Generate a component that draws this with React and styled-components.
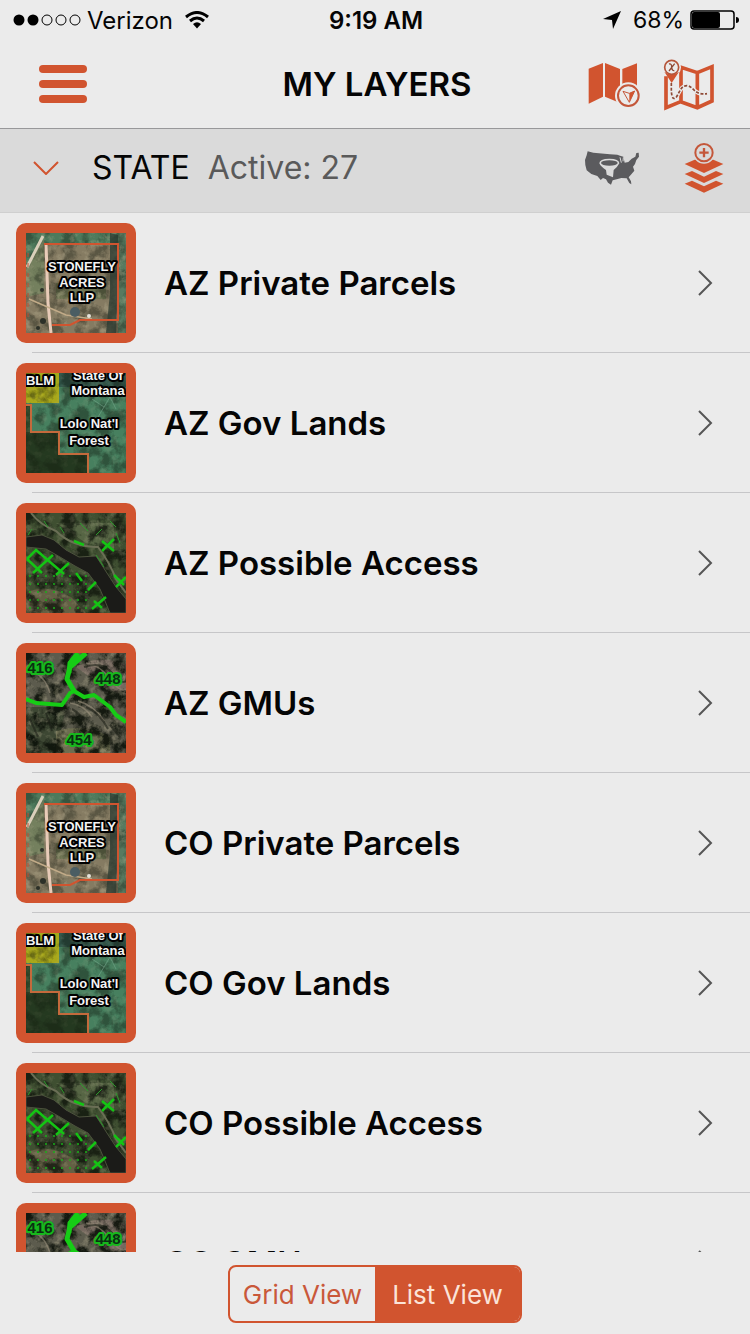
import React, { useState } from "react";
import styled, { createGlobalStyle } from "styled-components";

const LAYERS = [
  { id: 1, name: "AZ Private Parcels", kind: "parcels" },
  { id: 2, name: "AZ Gov Lands", kind: "gov" },
  { id: 3, name: "AZ Possible Access", kind: "access" },
  { id: 4, name: "AZ GMUs", kind: "gmu" },
  { id: 5, name: "CO Private Parcels", kind: "parcels" },
  { id: 6, name: "CO Gov Lands", kind: "gov" },
  { id: 7, name: "CO Possible Access", kind: "access" },
  { id: 8, name: "CO GMUs", kind: "gmu" },
];

const App = () => {
  const [view, setView] = useState("list");
  const [open, setOpen] = useState(true);

  return (
    <Page>
      <GlobalStyle />
      <TextureDefs />
      <Header>
        <StatusBar />
        <NavBar>
          <NavSide>
            <IconButton aria-label="Menu">
              <MenuIcon />
            </IconButton>
          </NavSide>
          <Title>MY LAYERS</Title>
          <NavSide $end>
            <IconButton aria-label="My location map">
              <MapIcon />
            </IconButton>
            <IconButton aria-label="Offline maps">
              <RouteMapIcon />
            </IconButton>
          </NavSide>
        </NavBar>
      </Header>
      <SectionBar>
        <SectionToggle aria-expanded={open} onClick={() => setOpen(!open)}>
          <ChevronDown />
          <SectionName>STATE</SectionName>
          <ActiveCount>Active: 27</ActiveCount>
        </SectionToggle>
        <SectionActions>
          <IconButton aria-label="Filter by state">
            <StatesIcon />
          </IconButton>
          <IconButton aria-label="Add layer">
            <AddLayerIcon />
          </IconButton>
        </SectionActions>
      </SectionBar>
      <LayerList>
        {open && LAYERS.map((layer) => <LayerRow key={layer.id} {...layer} />)}
      </LayerList>
      <Footer>
        <Segments>
          <Segment
            $active={view === "grid"}
            aria-pressed={view === "grid"}
            onClick={() => setView("grid")}
          >
            Grid View
          </Segment>
          <Segment
            $active={view === "list"}
            aria-pressed={view === "list"}
            onClick={() => setView("list")}
          >
            List View
          </Segment>
        </Segments>
      </Footer>
    </Page>
  );
};

export default App;

const StatusBar = () => (
  <Status>
    <StatusGroup>
      <svg width="68" height="12" viewBox="0 0 68 12" aria-hidden="true">
        <circle cx="6" cy="6" r="5.500" />
        <circle cx="20" cy="6" r="5.500" />
        <g fill="none" stroke="#000">
          <circle cx="34" cy="6" r="5" />
          <circle cx="48" cy="6" r="5" />
          <circle cx="62" cy="6" r="5" />
        </g>
      </svg>
      <Carrier>Verizon</Carrier>
      <WifiIcon />
    </StatusGroup>
    <Clock>9:19 AM</Clock>
    <StatusGroup $end>
      <svg width="18" height="18" viewBox="0 0 18 18" aria-hidden="true">
        <path d="M18 0 L10 18 L9 9 L0 8 Z" />
      </svg>
      <Percent>68%</Percent>
      <svg width="49" height="20" viewBox="0 0 49 20" aria-hidden="true">
        <rect x="1" y="1" width="43" height="18" rx="3" fill="none" stroke="#000" strokeWidth="1.5" />
        <rect x="2" y="2" width="28" height="16" rx="2" />
        <path d="M46 7 Q49 7 49 10 Q49 13 46 13 Z" />
      </svg>
    </StatusGroup>
  </Status>
);

const WifiIcon = () => (
  <svg width="24" height="18" viewBox="0 0 24 18" aria-hidden="true">
    <g fill="none" stroke="#000" strokeWidth="3">
      <path d="M1 6 Q12 -3 23 6" />
      <path d="M5 10 Q12 4 19 10" />
    </g>
    <path d="M8 13 Q12 9.500 16 13 L12 17.500 Z" />
  </svg>
);

const MenuIcon = () => (
  <svg width="48" height="38" viewBox="0 0 48 38">
    <rect width="48" height="8" rx="4" />
    <rect y="15" width="48" height="8" rx="4" />
    <rect y="30" width="48" height="8" rx="4" />
  </svg>
);

const MapIcon = () => (
  <svg width="54" height="46" viewBox="0 0 162 138">
    <path d="M5 23 L48 6 V107 L5 128 Z" />
    <path d="M54 6 L99 24 V126 L54 107 Z" />
    <path d="M106 24 L150 7 V107 L106 126 Z" />
    <circle cx="124" cy="104" r="40" fill="#ebebeb" />
    <circle cx="124" cy="104" r="31" fill="none" stroke="#c4573a" strokeWidth="6" />
    <path d="M108 91 L127 97 L143 90 L127 124 Z" fill="none" stroke="#c4573a" strokeWidth="3" />
    <path d="M127 97 L143 90 L127 124 Z" />
  </svg>
);

const RouteMapIcon = () => (
  <svg width="52" height="54" viewBox="0 0 156 162">
    <path
      d="M9 58 V152 L53 134 L103 152 L147 132 V29 L103 47 L54 31 V134 M103 47 V152"
      fill="none"
      stroke="#d1542f"
      strokeWidth="11"
    />
    <path
      d="M25 78 V104 Q28 134 40 120 C52 102 54 86 72 86 C92 88 94 116 132 110"
      fill="none"
      stroke="#ebebeb"
      strokeWidth="12"
    />
    <path
      d="M25 78 V104 Q28 134 40 120 C52 102 54 86 72 86 C92 88 94 116 132 110"
      fill="none"
      stroke="#8f4a36"
      strokeWidth="5"
      strokeDasharray="9 5"
    />
    <circle cx="26" cy="31" r="28" fill="#ebebeb" />
    <path d="M4 44 Q26 60 48 44 L26 78 Z" />
    <circle cx="26" cy="31" r="21" fill="#ebebeb" stroke="#b5553a" strokeWidth="5" />
    <path d="M18 21 Q26 19 26 30 Q27 42 34 41 M35 20 L18 42" fill="none" stroke="#8f4a36" strokeWidth="4" />
  </svg>
);

const ChevronDown = () => (
  <svg width="26" height="14" viewBox="0 0 26 14" aria-hidden="true">
    <path d="M1 1 L13 13 L25 1" fill="none" stroke="#d1542f" strokeWidth="2" />
  </svg>
);

const ChevronRight = () => (
  <svg width="16" height="26" viewBox="0 0 16 26" aria-hidden="true">
    <path d="M2 1 L14 13 L2 25" fill="none" stroke="#555" strokeWidth="2" />
  </svg>
);

const StatesIcon = () => (
  <svg width="56" height="36" viewBox="0 0 168 108">
    <path
      fill="#5b5b5e"
      d="M11 4 L28 8 L78 13 L100 14 L108 17 L118 20 L122 38 L133 36 L143 26 L154 20 L157 9 L164 8 L165 20 L157 30 L153 42 L147 50 L151 62 L142 73 L134 82 L141 94 L142 103 L136 99 L128 85 L112 84 L98 88 L86 91 L81 104 L72 98 L66 88 L57 84 L50 90 L40 78 L22 72 L8 61 L4 45 L3 30 L8 16 Z"
    />
    <path d="M108 22 L112 38 M118 22 L117 34" stroke="#dadada" strokeWidth="3" />
    <path d="M46 40 Q46 26 76 26 Q106 26 106 40 Q100 52 89 60 L87 82 L68 74 L66 60 Q50 50 46 40 Z" fill="#dadada" />
    <ellipse cx="76" cy="39" rx="25" ry="8" fill="#5b5b5e" />
  </svg>
);

const AddLayerIcon = () => (
  <svg width="40" height="50" viewBox="0 0 120 150">
    <path d="M2 63 L32 50 H88 L118 63 L60 90 Z" />
    <path d="M2 93 L24 84 L60 101 L96 84 L118 93 L60 120 Z" />
    <path d="M2 122 L24 113 L60 130 L96 113 L118 122 L60 149 Z" />
    <circle cx="60" cy="29" r="33" fill="#dadada" />
    <circle cx="60" cy="29" r="26" fill="none" stroke="#c4573a" strokeWidth="6" />
    <path d="M60 15 V43 M46 29 H74" stroke="#c4573a" strokeWidth="7" />
  </svg>
);

const LayerRow = ({ name, kind }) => {
  const Scene = SCENES[kind];
  return (
    <Row>
      <RowButton>
        <Thumb viewBox="0 0 100 100" aria-hidden="true">
          <Scene />
        </Thumb>
        <LayerName>{name}</LayerName>
        <ChevronRight />
      </RowButton>
    </Row>
  );
};

// noise filters shared by all the thumbnails
const TextureDefs = () => (
  <Defs aria-hidden="true">
    <filter id="shade" x="0" y="0" width="1" height="1" colorInterpolationFilters="sRGB">
      <feTurbulence type="fractalNoise" baseFrequency="0.08" numOctaves="5" seed="4" />
      <feColorMatrix values="0 0 0 0 0.05  0 0 0 0 0.07  0 0 0 0 0.04  4 0 0 0 -1.6" />
    </filter>
    <filter id="grain" x="0" y="0" width="1" height="1" colorInterpolationFilters="sRGB">
      <feTurbulence type="fractalNoise" baseFrequency="0.14" numOctaves="4" seed="9" />
      <feColorMatrix values="0 0 0 0 0.75  0 0 0 0 0.72  0 0 0 0 0.6  0 4 0 0 -2" />
    </filter>
  </Defs>
);

const Texture = ({ shade, grain }) => (
  <>
    <rect width="100" height="100" filter="url(#shade)" opacity={shade} />
    <rect width="100" height="100" filter="url(#grain)" opacity={grain} />
  </>
);

const ParcelsScene = () => (
  <>
    <rect width="100" height="100" fill="#857b62" />
    <path d="M0 0 H100 V10 H20 L0 40 Z" fill="#4d7a5c" />
    <path d="M0 34 L18 6 V60 L0 64 Z" fill="#74805e" />
    <path d="M92 0 H100 V100 H92 Z" fill="#587a60" />
    <path d="M30 50 H80 V66 H30 Z" fill="#6d7352" />
    <Texture shade="0.35" grain="0.3" />
    <path d="M84 0 L92 2 V34 L90 100 H80 L84 60 Z" fill="#2b3a30" opacity="0.75" />
    <path d="M1 34 L17 3" stroke="#d9cfba" strokeWidth="3" />
    <path d="M20 10 L22 70 L25 100" fill="none" stroke="#e8cbb8" strokeWidth="3" />
    <path d="M3 66 L40 82 L66 86" fill="none" stroke="#c2ab88" strokeWidth="1.500" />
    <path d="M18 11 H92 V87 H54 L44 92 H26" fill="none" stroke="#d1542f" strokeWidth="2" />
    <path d="M2 20 V88" stroke="#b5553a" strokeWidth="1" strokeDasharray="4 6" />
    <circle cx="49" cy="79" r="5" fill="#4a5d63" />
    <g fill="#2c3028">
      <circle cx="16" cy="57" r="2" />
      <circle cx="17" cy="88" r="3" />
      <circle cx="12" cy="95" r="2" />
    </g>
    <circle cx="63" cy="83" r="2" fill="#e6e4dc" />
    <MapLabel x="56" y="38">STONEFLY</MapLabel>
    <MapLabel x="56" y="54">ACRES</MapLabel>
    <MapLabel x="56" y="69">LLP</MapLabel>
  </>
);

const GovScene = () => (
  <>
    <rect width="100" height="100" fill="#47805f" />
    <path d="M33 0 H100 V14 H33 Z" fill="#33584c" />
    <path d="M0 0 H33 V30 H0 Z" fill="#a8a81a" />
    <path d="M0 32 H5 V59 H33 V81 H62 V100 H0 Z" fill="#2f4528" />
    <Texture shade="0.4" grain="0.12" />
    <path d="M0 59 H33 V81 H62 V100 H0 Z" fill="#182b16" opacity="0.45" />
    <path d="M72 44 L84 24 M84 24 L90 36 M66 26 L78 34" stroke="#7fb096" opacity="0.5" />
    <path d="M0 32 H5 V59 H33 V81 H62 V100" fill="none" stroke="#c46a3c" strokeWidth="2" />
    <MapLabel x="14" y="12">BLM</MapLabel>
    <MapLabel x="72" y="7">State Of</MapLabel>
    <MapLabel x="72" y="22">Montana</MapLabel>
    <MapLabel x="63" y="55">Lolo Nat'l</MapLabel>
    <MapLabel x="63" y="72">Forest</MapLabel>
  </>
);

const DOTS = [0, 1, 2, 3, 4, 5, 6, 7].flatMap((col) =>
  [0, 1, 2, 3, 4].map((row) => ({ x: 4 + col * 8, y: 63 + row * 8 }))
);

const AccessScene = () => (
  <>
    <rect width="100" height="100" fill="#3f4f31" />
    <path d="M30 10 H88 V36 L60 30 Z" fill="#566544" />
    <path d="M0 80 Q20 70 45 84 L60 100 H0 Z" fill="#636044" />
    <Texture shade="0.75" grain="0.2" />
    <path d="M5 0 Q14 12 30 18 Q46 34 72 34 Q84 50 90 66 L100 80" fill="none" stroke="#6b6f56" strokeWidth="2" />
    <path
      d="M0 24 L16 22 L28 27 L40 37 L53 44 L70 43 L79 57 L90 74 L100 86 V100 H84 L74 76 L62 60 L49 53 L34 44 L20 36 L0 34 Z"
      fill="#1b1b18"
      stroke="#4b513c"
    />
    <g fill="none" stroke="#14c414" strokeWidth="2.500">
      <path d="M1 46 L10 37 L38 61 M1 46 L16 60 M7 60 L27 42 M30 62 L43 50 M10 37 L16 42" />
      <path d="M76 28 L88 38 M76 38 L88 26 M62 77 L70 69 M66 96 L80 84 M68 88 L76 95" />
      <path d="M88 62 L98 72 M90 74 L100 64 M50 60 L56 68 M48 28 L58 32" />
    </g>
    <g fill="none" stroke="#2c9a2c" strokeWidth="1">
      <path d="M2 22 L6 16 M18 8 L22 14 M34 14 L38 20 M54 10 L62 18 M70 22 L76 16 M90 20 L94 30 M84 8 L90 14 M70 42 L78 54" />
    </g>
    <g fill="#19b019">
      {DOTS.map((dot) => (
        <circle key={`${dot.x}-${dot.y}`} cx={dot.x} cy={dot.y} r="1" />
      ))}
    </g>
  </>
);

const GmuScene = () => (
  <>
    <rect width="100" height="100" fill="#5c5b4d" />
    <path d="M50 14 Q74 0 100 12 V44 Q76 34 50 14 Z" fill="#75685f" />
    <path d="M0 54 H40 L30 100 H0 Z" fill="#3d4733" />
    <path d="M30 78 Q60 70 84 84 V100 H30 Z" fill="#6c6d50" />
    <Texture shade="0.9" grain="0.3" />
    <g fill="none" stroke="#9a8f7c" strokeWidth="1.500" opacity="0.6">
      <path d="M60 10 Q74 12 84 26 T100 36 M44 50 Q58 52 66 64 M52 48 Q68 52 78 68 M10 20 Q20 26 24 40" />
    </g>
    <g fill="none" stroke="#1d1f18" strokeWidth="2" opacity="0.6">
      <path d="M58 14 Q76 8 86 20 T100 28 M46 56 Q54 60 60 72 M60 54 Q74 60 82 76 M84 72 L94 84 M4 66 L12 84 M20 60 L26 78" />
    </g>
    <g fill="none" stroke="#16cc16" strokeLinejoin="round">
      <path d="M0 46 L10 50 L36 52 L44 40 L48 38 L58 44 L68 42 L84 54 L90 62 L100 69" strokeWidth="4" />
      <path d="M48 38 L41 26 L44 14 L60 0 M43 20 L44 10 L52 0" strokeWidth="5" />
    </g>
    <UnitLabel x="14" y="20">416</UnitLabel>
    <UnitLabel x="82" y="31">448</UnitLabel>
    <UnitLabel x="53" y="92">454</UnitLabel>
  </>
);

const SCENES = {
  parcels: ParcelsScene,
  gov: GovScene,
  access: AccessScene,
  gmu: GmuScene,
};

const GlobalStyle = createGlobalStyle`
  * {
    box-sizing: border-box;
  }
  body {
    margin: 0;
    background-color: #ebebeb;
    color: #050505;
    font-family: Inter, "Liberation Sans", sans-serif;
  }
  button {
    font: inherit;
    color: inherit;
    background: none;
    border: none;
    padding: 0;
    cursor: pointer;
  }
  svg {
    display: block;
    flex-shrink: 0;
  }
`;

const Page = styled.div`
  display: flex;
  flex-direction: column;
  height: 100vh;
`;

const Header = styled.header`
  border-bottom: 1px solid #98989a;
`;

const Status = styled.div`
  display: grid;
  grid-template-columns: 1fr auto 1fr;
  align-items: center;
  height: 40px;
  padding: 0 11px 0 13px;
  font-size: 24px;
`;

const StatusGroup = styled.div`
  display: flex;
  align-items: center;
  justify-content: ${({ $end }) => ($end ? "flex-end" : "flex-start")};
  gap: 6px;
`;

const Carrier = styled.span`
  margin-right: 6px;
`;

const Percent = styled.span`
  margin-left: 6px;
  font-size: 23px;
`;

const Clock = styled.span`
  font-weight: 600;
`;

const NavBar = styled.nav`
  display: flex;
  align-items: center;
  height: 88px;
  padding: 0 35px 0 39px;
`;

const NavSide = styled.div`
  display: flex;
  flex: 1;
  align-items: center;
  justify-content: ${({ $end }) => ($end ? "flex-end" : "flex-start")};
  gap: 22px;
`;

const IconButton = styled.button`
  fill: #d1542f;
`;

const Title = styled.h1`
  margin: 0;
  font-size: 33px;
  font-weight: 600;
`;

const SectionBar = styled.div`
  display: flex;
  align-items: center;
  justify-content: space-between;
  height: 84px;
  padding: 0 26px 6px 33px;
  background-color: #dadada;
  border-bottom: 1px solid #cfcfcf;
`;

const SectionToggle = styled.button`
  display: flex;
  align-items: center;
  font-size: 32px;
`;

const SectionName = styled.span`
  margin-left: 33px;
`;

const ActiveCount = styled.span`
  margin-left: 18px;
  color: #5a5a5a;
`;

const SectionActions = styled.div`
  display: flex;
  align-items: center;
  gap: 44px;
`;

const LayerList = styled.ul`
  flex: 1;
  min-height: 0;
  margin: 0;
  padding: 0;
  list-style: none;
  overflow-y: auto;
  scrollbar-width: none;
`;

const Row = styled.li`
  &::after {
    content: "";
    display: block;
    height: 1px;
    margin-left: 32px;
    background-color: #c6c6c8;
  }
`;

const RowButton = styled.button`
  display: flex;
  align-items: center;
  width: 100%;
  padding: 10px 37px 9px 16px;
  text-align: left;
`;

const Thumb = styled.svg`
  width: 120px;
  height: 120px;
  border: 10px solid #d1542f;
  border-radius: 10px;
`;

const LayerName = styled.span`
  flex: 1;
  margin-left: 28px;
  font-size: 33px;
  font-weight: 600;
`;

const MapLabel = styled.text`
  font-family: "Liberation Sans", sans-serif;
  font-size: 13px;
  font-weight: bold;
  text-anchor: middle;
  fill: #f4f4f4;
  stroke: #000;
  stroke-width: 4px;
  stroke-linejoin: round;
  paint-order: stroke;
`;

const UnitLabel = styled(MapLabel)`
  font-size: 15px;
  fill: #0b2e12;
  stroke: #16b81c;
`;

const Defs = styled.svg`
  width: 0;
  height: 0;
`;

const Footer = styled.footer`
  display: flex;
  justify-content: center;
  padding: 13px 0 11px;
`;

const Segments = styled.div`
  display: flex;
  border: 2px solid #d1542f;
  border-radius: 8px;
  overflow: hidden;
`;

const Segment = styled.button`
  width: 145px;
  height: 54px;
  font-size: 26px;
  color: ${({ $active }) => ($active ? "#fbe3d8" : "#c9583a")};
  background-color: ${({ $active }) => ($active ? "#d1542f" : "transparent")};
`;
